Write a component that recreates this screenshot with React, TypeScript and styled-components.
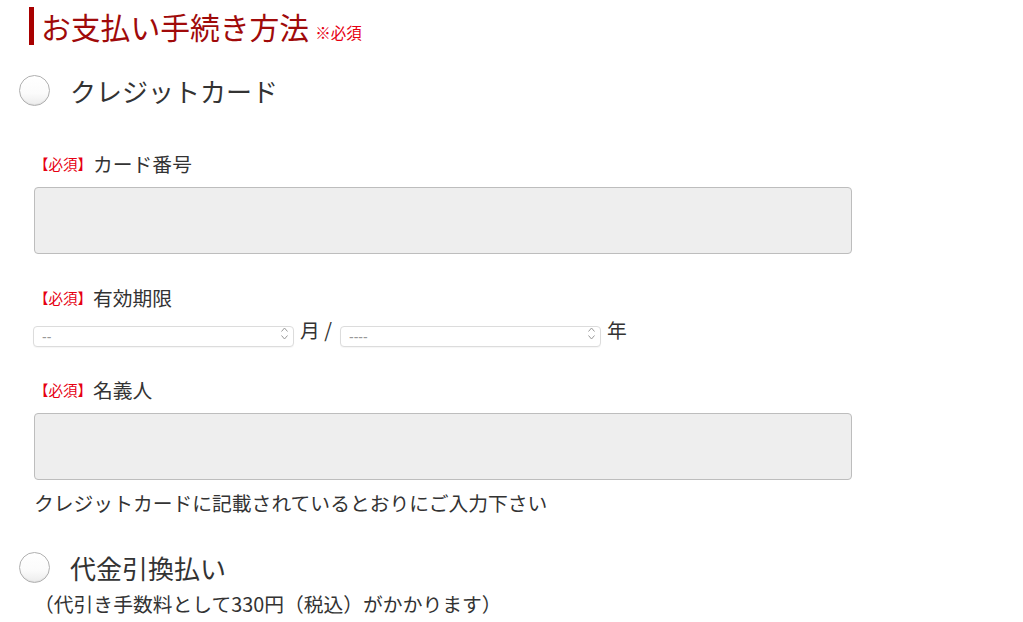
import { FC } from 'react'
import styled, { createGlobalStyle } from 'styled-components'

const GlobalStyle = createGlobalStyle`
  body {
    margin: 0;
    background: #fff;
    color: #333;
    font-family: "Noto Sans CJK JP", "Noto Sans", sans-serif;
  }
`

const Required: FC = () => <SRequired>【必須】</SRequired>

const Chevrons: FC = () => (
  <SChevrons width="9" height="15" viewBox="0 0 9 15">
    <path d="M1.5 5.5 L4.5 2 L7.5 5.5" fill="none" stroke="#999" strokeWidth="1" />
    <path d="M1.5 9.5 L4.5 13 L7.5 9.5" fill="none" stroke="#999" strokeWidth="1" />
  </SChevrons>
)

const Select: FC<{ placeholder: string }> = ({ placeholder }) => (
  <SSelectWrap>
    <SSelect defaultValue="">
      <option value="">{placeholder}</option>
    </SSelect>
    <Chevrons />
  </SSelectWrap>
)

export default function App() {
  return (
    <>
      <GlobalStyle />
      <SSection>
        <Heading>
          お支払い手続き方法<small>※必須</small>
        </Heading>

        <RadioRow $top={30}>
          <Radio type="radio" name="pay" />
          <RadioLabel>クレジットカード</RadioLabel>
        </RadioRow>

        <FieldLabel $top={46}>
          <Required />カード番号
        </FieldLabel>
        <TextInput type="text" />

        <FieldLabel $top={32}>
          <Required />有効期限
        </FieldLabel>
        <ExpiryRow>
          <Select placeholder="--" />
          <Unit>月 /</Unit>
          <Select placeholder="----" />
          <Unit>年</Unit>
        </ExpiryRow>

        <FieldLabel $top={33}>
          <Required />名義人
        </FieldLabel>
        <TextInput type="text" />
        <Note $top={11}>クレジットカードに記載されているとおりにご入力下さい</Note>

        <RadioRow $top={37}>
          <Radio type="radio" name="pay" />
          <RadioLabel>代金引換払い</RadioLabel>
        </RadioRow>
        <Note $top={9}>（代引き手数料として330円（税込）がかかります）</Note>
      </SSection>
    </>
  )
}

const SSection = styled.section`
  padding-top: 7px;
  width: 1023px;
`

const Heading = styled.h2`
  margin: 0 0 0 29px;
  height: 38px;
  border-left: 5px solid #a80000;
  padding-left: 7px;
  font-size: 29.8px;
  font-weight: normal;
  line-height: 38px;
  color: #a00a0a;

  > small {
    margin-left: 6px;
    font-size: 15.5px;
    line-height: 1;
    color: #e60012;
  }
`

const RadioRow = styled.label<{ $top: number }>`
  display: flex;
  align-items: center;
  margin: ${(p) => p.$top}px 0 0 19px;
  height: 31px;
`

const Radio = styled.input`
  appearance: none;
  flex: none;
  margin: 0;
  width: 31px;
  height: 31px;
  border-radius: 50%;
  border: 1px solid #b0b0b0;
  background: linear-gradient(#fff 0%, #fbfbfb 60%, #ececec 100%);
  box-shadow: inset 0 -1px 1px rgba(0, 0, 0, 0.06);
`

const RadioLabel = styled.span`
  margin-left: 20px;
  font-size: 26px;
  line-height: 31px;
  color: #333;
`

const FieldLabel = styled.div<{ $top: number }>`
  display: flex;
  align-items: center;
  margin: ${(p) => p.$top}px 0 0 34px;
  height: 24px;
  font-size: 19.8px;
  line-height: 24px;
  color: #333;
`

const SRequired = styled.span`
  margin-right: 1px;
  font-size: 14.5px;
  line-height: 1;
  color: #e60012;
`

const TextInput = styled.input`
  display: block;
  box-sizing: border-box;
  margin: 11px 0 0 34px;
  width: 818px;
  height: 67px;
  border: 1px solid #bdbdbd;
  border-radius: 4px;
  background: #eee;
`

const ExpiryRow = styled.div`
  display: flex;
  align-items: center;
  margin: 11px 0 0 33px;
  height: 24px;
`

const SSelectWrap = styled.div`
  position: relative;
  flex: none;
  width: 261px;
  height: 21px;
`

const SSelect = styled.select`
  appearance: none;
  box-sizing: border-box;
  width: 100%;
  height: 100%;
  border: 1px solid #dcdcdc;
  border-radius: 4px;
  background: #fff;
  padding: 0 0 0 8px;
  font-family: "Liberation Sans", sans-serif;
  font-size: 14px;
  color: #999;
  box-shadow: 0 1px 1px rgba(0, 0, 0, 0.04);
`

const SChevrons = styled.svg`
  position: absolute;
  right: 5px;
  top: 3px;
  pointer-events: none;
`

const Unit = styled.span`
  margin: -6px 8px 0 6px;
  font-size: 19.8px;
  line-height: 24px;
  color: #333;
`

const Note = styled.p<{ $top: number }>`
  margin: ${(p) => p.$top}px 0 0 34px;
  font-size: 19.8px;
  line-height: 24px;
  color: #333;
`
